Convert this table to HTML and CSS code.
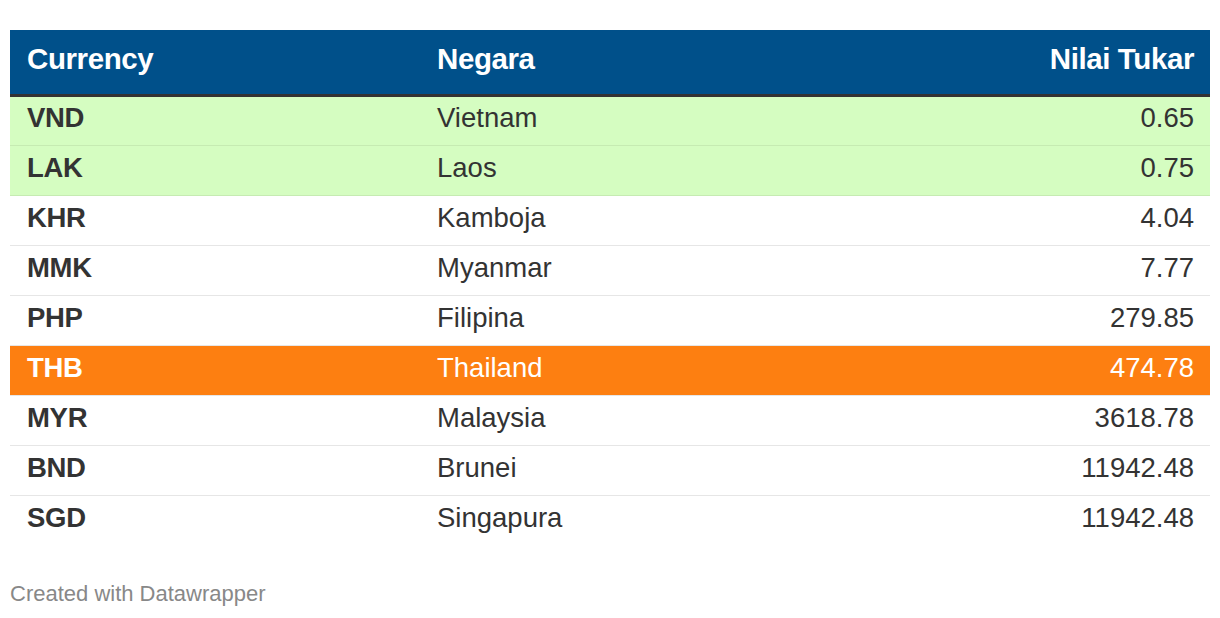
FILE: index.html
```html
<!DOCTYPE html>
<html lang="id">
<head>
<meta charset="utf-8">
<title>Currency</title>
<link rel="stylesheet" href="styles.css">
</head>
<body>
<div class="chart">
  <table class="rates">
    <thead>
      <tr><th class="c1">Currency</th><th class="c2">Negara</th><th class="c3">Nilai Tukar</th></tr>
    </thead>
    <tbody>
      <tr class="green"><td class="c1">VND</td><td class="c2">Vietnam</td><td class="c3">0.65</td></tr>
      <tr class="green"><td class="c1">LAK</td><td class="c2">Laos</td><td class="c3">0.75</td></tr>
      <tr><td class="c1">KHR</td><td class="c2">Kamboja</td><td class="c3">4.04</td></tr>
      <tr><td class="c1">MMK</td><td class="c2">Myanmar</td><td class="c3">7.77</td></tr>
      <tr><td class="c1">PHP</td><td class="c2">Filipina</td><td class="c3">279.85</td></tr>
      <tr class="orange"><td class="c1">THB</td><td class="c2">Thailand</td><td class="c3">474.78</td></tr>
      <tr><td class="c1">MYR</td><td class="c2">Malaysia</td><td class="c3">3618.78</td></tr>
      <tr><td class="c1">BND</td><td class="c2">Brunei</td><td class="c3">11942.48</td></tr>
      <tr class="last"><td class="c1">SGD</td><td class="c2">Singapura</td><td class="c3">11942.48</td></tr>
    </tbody>
  </table>
  <div class="credit">Created with Datawrapper</div>
</div>
</body>
</html>
```
FILE: styles.css
```css
html, body {
  margin: 0;
  padding: 0;
  background: #fff;
}
body {
  font-family: "Liberation Sans", Arial, Helvetica, sans-serif;
  color: #333;
}
.chart {
  padding: 30px 10px 0 10px;
}
.rates {
  width: 100%;
  border-collapse: collapse;
  table-layout: fixed;
}
.rates .c1 { width: 410px; }
.rates .c2 { width: auto; }
.rates .c3 { width: 400px; text-align: right; }
.rates th {
  background: #00508a;
  color: #fff;
  font-weight: bold;
  font-size: 29.5px;
  letter-spacing: -0.4px;
  height: 65px;
  padding: 0 16px 5px 17px;
  text-align: left;
  vertical-align: middle;
  border-bottom: 3px solid #333;
  box-sizing: border-box;
}
.rates th.c3 { text-align: right; }
.rates td {
  font-size: 27.5px;
  height: 50px;
  padding: 0 16px 5px 17px;
  border-bottom: 1px solid #e6e6e6;
  box-sizing: border-box;
  vertical-align: middle;
}
.rates td.c1 {
  font-weight: bold;
  letter-spacing: -0.3px;
}
.rates tr.green td {
  background: #d5fdc1;
  border-bottom-color: #c6ebb2;
}
.rates tr.orange td {
  background: #fd7f11;
  color: #fff;
  border-bottom-color: #e6e6e6;
}
.rates tr.last td {
  border-bottom: none;
}
.credit {
  margin-top: 36px;
  font-size: 22px;
  color: #888;
}
```
